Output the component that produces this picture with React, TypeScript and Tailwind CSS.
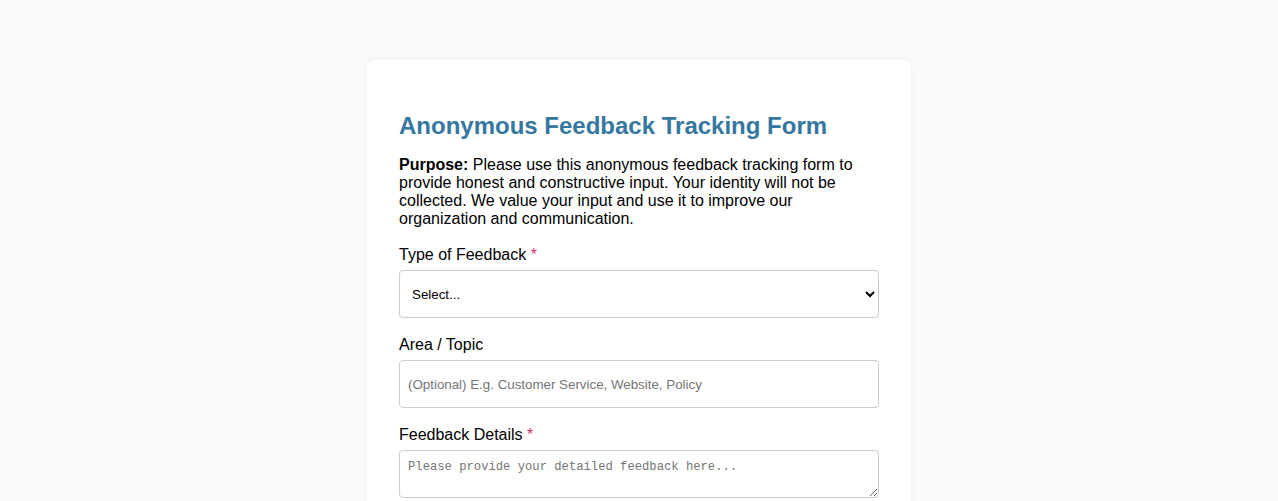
import React from 'react';

const Req: React.FC = () => <span className="text-[#d6336c]"> *</span>;

const App: React.FC = () => {
  return (
    <div className="min-h-[501px] bg-[#f9f9f9] pt-[60px] font-['Liberation_Sans',Arial,sans-serif] text-black">
      <div className="mx-auto w-[544px] rounded-lg bg-white px-8 pt-[52px] pb-8 shadow-[0_0_6px_rgba(0,0,0,0.04)]">
        <h2 className="text-[24px] font-bold leading-[28px] text-[#3577a0]">
          Anonymous Feedback Tracking Form
        </h2>
        <p className="mt-[16px] text-[16px] leading-[18px]">
          <strong>Purpose:</strong> Please use this anonymous feedback tracking form to provide honest and
          constructive input. Your identity will not be collected. We value your input and use it to
          improve our organization and communication.
        </p>

        <form className="mt-[18px]">
          <div className="mb-[18px]">
            <label className="block text-[16px] leading-[18px]">
              Type of Feedback<Req />
            </label>
            <select
              defaultValue=""
              className="mt-[6px] block h-[48px] w-full rounded-[4px] border border-[#ccc] bg-white px-2 text-[13.33px] text-black"
            >
              <option value="">Select...</option>
              <option>Suggestion</option>
              <option>Concern</option>
              <option>Compliment</option>
            </select>
          </div>

          <div className="mb-[18px]">
            <label className="block text-[16px] leading-[18px]">Area / Topic</label>
            <input
              type="text"
              placeholder="(Optional) E.g. Customer Service, Website, Policy"
              className="mt-[6px] block h-[48px] w-full rounded-[4px] border border-[#ccc] px-2 text-[13.33px] placeholder:text-[#757575]"
            />
          </div>

          <div>
            <label className="block text-[16px] leading-[18px]">
              Feedback Details<Req />
            </label>
            <textarea
              placeholder="Please provide your detailed feedback here..."
              className="mt-[6px] block h-[48px] w-full rounded-[4px] border border-[#ccc] px-2 pt-[9px] pb-[7px] font-['Liberation_Mono',monospace] text-[12.2px] leading-[14px] placeholder:text-[#757575]"
            />
          </div>
        </form>
      </div>
    </div>
  );
};

export default App;
